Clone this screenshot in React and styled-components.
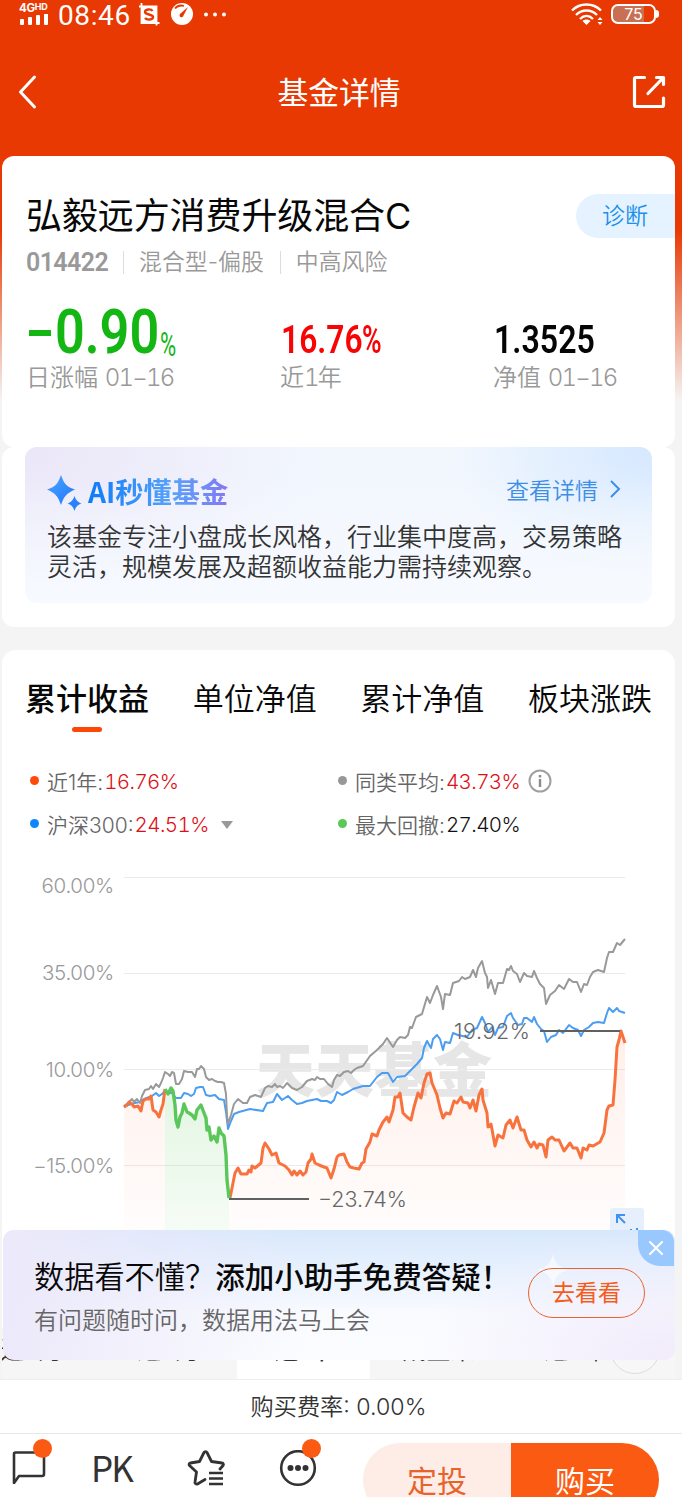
import React from 'react';
import styled, { createGlobalStyle } from 'styled-components';

const tabs = ['累计收益', '单位净值', '累计净值', '板块涨跌'];

const periods = ['近3月', '近6月', '近1年', '成立来', '近2年'];

const gridLines = [
    { label: '60.00%', y: 877.5, textY: 893 },
    { label: '35.00%', y: 973.5, textY: 980 },
    { label: '10.00%', y: 1069.5, textY: 1077 },
    { label: '−15.00%', y: 1165.5, textY: 1173 },
];

const averageLine =
    '124,1106 128,1103 132,1099 134,1102 137,1099 140,1103 142,1096 145,1090 149,1089 151,1086 153,1089 156,1084 159,1087 161,1083 163,1078 165,1072 168,1074 170,1076 172,1072 174,1073 176,1084 179,1084 182,1079 184,1071 188,1072 192,1072 195,1077 197,1069 199,1069 201,1066 204,1069 206,1077 209,1080 212,1079 215,1081 218,1082 221,1082 224,1083 226,1094 227,1115 228,1124 231,1115 234,1104 238,1099 243,1103 247,1103 250,1097 255,1095 261,1097 265,1088 268,1086 272,1087 275,1084 277,1087 280,1086 283,1088 287,1083 292,1088 297,1090 302,1087 307,1081 312,1079 315,1080 317,1077 320,1079 324,1079 328,1084 332,1087 334,1080 337,1075 340,1076 344,1072 348,1071 351,1073 354,1070 357,1068 363,1066 370,1056 377,1050 383,1044 387,1038 393,1047 397,1040 400,1037 405,1038 408,1035 410,1027 412,1028 416,1017 422,1014 427,997 430,1003 433,995 437,986 441,997 443,1009 445,994 450,995 453,983 459,981 462,977 465,979 470,977 473,970 476,977 478,968 482,961 485,973 487,977 488,988 491,980 495,994 498,983 503,983 507,969 509,970 511,966 513,971 517,974 520,982 524,973 527,976 532,977 534,971 537,978 540,984 544,988 546,1004 550,995 555,991 559,985 564,989 569,979 573,982 577,982 581,992 584,984 587,985 590,977 593,972 598,970 604,972 607,958 609,952 613,952 617,943 620,945 625,939';

const indexLine =
    '124,1107 128,1105 132,1104 135,1103 140,1102 144,1099 152,1096 156,1093 159,1096 162,1094 165,1091 168,1093 172,1093 176,1098 181,1098 184,1093 188,1094 191,1096 194,1094 196,1088 200,1087 203,1087 206,1095 210,1096 215,1095 219,1099 224,1100 226,1112 228,1129 231,1121 234,1114 239,1112 250,1109 263,1111 267,1103 273,1102 277,1094 282,1100 288,1096 292,1100 297,1104 302,1103 307,1101 317,1099 321,1101 327,1101 331,1103 334,1100 337,1092 342,1095 348,1092 353,1089 363,1086 370,1086 377,1077 382,1073 388,1073 393,1082 397,1077 405,1076 412,1069 417,1064 422,1058 424,1048 427,1041 431,1048 433,1039 437,1035 440,1039 443,1050 445,1042 450,1043 453,1033 458,1035 467,1037 472,1030 477,1028 482,1017 485,1023 488,1032 492,1027 495,1035 498,1028 503,1027 507,1016 511,1013 513,1018 518,1025 522,1024 524,1018 527,1018 532,1022 534,1017 537,1024 541,1029 544,1031 547,1042 551,1037 556,1035 559,1030 563,1033 569,1025 573,1028 578,1030 581,1036 584,1030 589,1027 593,1023 598,1022 604,1023 607,1013 609,1008 613,1012 617,1008 619,1011 625,1013';

const fundStart =
    '124,1107 127,1105 129,1102 132,1104 134,1107 138,1106 141,1111 143,1101 146,1099 149,1099 151,1096 153,1110 156,1112 159,1117 161,1110 163,1104 165,1089';

const drawdownLine =
    '165,1089 168,1094 171,1088 173,1091 175,1105 176,1120 178,1127 180,1117 182,1113 184,1104 187,1112 189,1113 192,1115 195,1119 197,1110 201,1105 204,1113 206,1118 207,1130 209,1127 211,1140 214,1136 217,1142 219,1128 221,1133 224,1136 226,1155 227,1180 229,1198';

const fundEnd =
    '230,1198 233,1183 235,1173 238,1168 241,1174 247,1174 249,1170 251,1172 252,1166 255,1168 261,1163 263,1148 265,1143 269,1149 272,1155 276,1153 279,1163 285,1166 289,1170 292,1175 294,1171 297,1175 300,1171 303,1175 306,1172 308,1163 311,1159 312,1154 315,1163 319,1165 324,1167 327,1168 331,1178 334,1169 337,1157 339,1155 344,1154 347,1162 350,1167 354,1168 359,1169 362,1163 364,1162 366,1149 370,1142 372,1134 377,1136 379,1130 383,1122 387,1117 389,1122 393,1110 395,1097 398,1097 400,1093 403,1113 407,1117 411,1120 414,1107 418,1093 421,1098 424,1083 427,1074 430,1073 432,1083 435,1090 437,1095 440,1108 443,1118 446,1113 450,1114 454,1101 457,1103 461,1097 463,1102 468,1103 470,1108 473,1100 476,1111 479,1095 482,1089 483,1100 487,1113 488,1127 491,1124 495,1146 498,1135 503,1138 506,1125 510,1120 513,1128 517,1117 521,1130 524,1130 527,1140 531,1147 534,1142 537,1148 539,1144 543,1145 546,1157 548,1140 552,1137 555,1140 559,1140 564,1151 570,1143 573,1148 577,1148 581,1158 583,1148 587,1150 589,1145 593,1146 600,1142 604,1133 607,1110 609,1106 613,1105 615,1080 617,1047 619,1040 621,1031 625,1043';

function StatusBar() {
    return (
        <Status>
            <Signal>
                <Network>
                    4G<small>HD</small>
                </Network>
                <svg width="30" height="13" viewBox="0 0 30 13" fill="#fff">
                    <rect x="1" y="5" width="4" height="6" rx="1" />
                    <rect x="9" y="3" width="4" height="8" rx="1" />
                    <rect x="17" y="1" width="4" height="10" rx="1" />
                    <rect x="25" y="-1" width="4" height="12" rx="1" />
                </svg>
            </Signal>
            <Clock>08:46</Clock>
            <StatusIcons width="92" height="28" viewBox="0 0 92 28">
                <path d="M3.500 2v20h18M1 5.500h17.500v19" fill="none" stroke="#fff" strokeWidth="1.800" />
                <rect x="3" y="5" width="16" height="17" fill="#fff" />
                <path
                    d="M14.500 10c-1.500-2.500-7.500-2-7.500 1s8 2 8 5-6 3.500-8 1"
                    fill="none"
                    stroke="#e83903"
                    strokeWidth="2.400"
                />
                <circle cx="44" cy="13" r="11" fill="#fff" />
                <path d="M37 7.500a8.500 8.500 0 0 1 9-2.500" fill="none" stroke="#e83903" strokeWidth="1.800" />
                <path d="M50 6l-4.500 8.500a2 2 0 1 1-3-2z" fill="#e83903" />
                <g fill="#fff">
                    <circle cx="68" cy="13.500" r="2" />
                    <circle cx="77" cy="13.500" r="2" />
                    <circle cx="86" cy="13.500" r="2" />
                </g>
            </StatusIcons>
            <Wifi width="32" height="24" viewBox="0 0 32 24">
                <g fill="none" stroke="#fff" strokeWidth="2.400">
                    <path d="M1 8.500c8-8 21-8 29 0" />
                    <path d="M5 13c6-6 15-6 21 0" />
                    <path d="M9 17c4-4 9-4 13 0" />
                </g>
                <path d="M11.500 19c2-2 6-2 8 0l-4 4z" fill="#fff" />
                <path d="M26.500 18l2.500-3 2.500 3zM26.500 20l2.500 3 2.500-3z" fill="#fff" />
            </Wifi>
            <Battery>75</Battery>
            <BatteryTip />
        </Status>
    );
}

function NavBar() {
    return (
        <Nav>
            <svg width="20" height="34" viewBox="0 0 20 34">
                <path
                    d="M16.500 2L2.500 17l14 15"
                    fill="none"
                    stroke="#fff"
                    strokeWidth="3"
                    strokeLinecap="round"
                    strokeLinejoin="round"
                />
            </svg>
            <NavTitle>基金详情</NavTitle>
            <svg width="34" height="34" viewBox="0 0 34 34">
                <g
                    fill="none"
                    stroke="#fff"
                    strokeWidth="3.200"
                    strokeLinecap="round"
                    strokeLinejoin="round"
                >
                    <path d="M12.500 2.500H4A1.500 1.500 0 0 0 2.500 4v26A1.500 1.500 0 0 0 4 31.500h26a1.500 1.500 0 0 0 1.500-1.500v-7" />
                    <path d="M24.500 2.500h7v7M31 3L16 18.500" />
                </g>
            </svg>
        </Nav>
    );
}

function FundSummary() {
    return (
        <SummaryCard>
            <TitleRow>
                <FundName>弘毅远方消费升级混合C</FundName>
                <Diagnose>诊断</Diagnose>
            </TitleRow>
            <Meta>
                <Code>014422</Code>
                <MetaItem>混合型-偏股</MetaItem>
                <MetaItem>中高风险</MetaItem>
            </Meta>
            <Metrics>
                <div>
                    <Value $color="#13b613" $size={61}>
                        <Minus />
                        <Digits $width={105} $scale={0.855}>
                            0.90
                        </Digits>
                        <SmallPercent>%</SmallPercent>
                    </Value>
                    <MetricLabel>
                        日涨幅 <MetricDate>01−16</MetricDate>
                    </MetricLabel>
                </div>
                <div>
                    <Value $color="#f90404" $size={38}>
                        <Digits $width={81} $scale={0.835}>
                            16.76
                        </Digits>
                        <Digits $width={20} $scale={0.7}>
                            %
                        </Digits>
                    </Value>
                    <MetricLabel>
                        近<MetricDate>1</MetricDate>年
                    </MetricLabel>
                </div>
                <div>
                    <Value $color="#050505" $size={38}>
                        <Digits $width={102} $scale={0.845}>
                            1.3525
                        </Digits>
                    </Value>
                    <MetricLabel>
                        净值 <MetricDate>01−16</MetricDate>
                    </MetricLabel>
                </div>
            </Metrics>
        </SummaryCard>
    );
}

function AiInsight() {
    return (
        <InsightCard>
            <InsightPanel>
                <InsightHeader>
                    <InsightSpark width="36" height="36" viewBox="0 0 36 36">
                        <defs>
                            <linearGradient id="spark" x1="0" y1="0" x2="1" y2="1">
                                <stop offset="0" stopColor="#4ba6ff" />
                                <stop offset="1" stopColor="#1e76fa" />
                            </linearGradient>
                        </defs>
                        <path
                            d="M14 0c3 9 6 12 14 14.500C20 18 17 21 14 30 11 21 8 18 0 14.500 8 12 11 9 14 0z"
                            fill="url(#spark)"
                        />
                        <path
                            d="M27.500 21c1.500 4 3 6 7 7.500-4 1.500-5.500 3-7 7.500-1.500-4.500-3-6-7-7.500 4-1.500 5.500-3.500 7-7.500z"
                            fill="#2b80fb"
                        />
                    </InsightSpark>
                    <InsightTitle>AI秒懂基金</InsightTitle>
                    <DetailLink>
                        查看详情
                        <svg width="12" height="20" viewBox="0 0 12 20">
                            <path d="M2 2l8 8-8 8" fill="none" stroke="#3e8ee6" strokeWidth="2" />
                        </svg>
                    </DetailLink>
                </InsightHeader>
                <InsightText>
                    该基金专注小盘成长风格，行业集中度高，交易策略
                    <br />
                    灵活，规模发展及超额收益能力需持续观察。
                </InsightText>
            </InsightPanel>
        </InsightCard>
    );
}

function Legend() {
    return (
        <LegendGrid>
            <LegendItem>
                <Dot $color="#ff4a09" />
                近1年:<LegendValue $color="#dc1016">16.76%</LegendValue>
            </LegendItem>
            <LegendItem>
                <Dot $color="#989898" />
                同类平均:<LegendValue $color="#dc1016">43.73%</LegendValue>
                <InfoIcon width="24" height="24" viewBox="0 0 24 24">
                    <circle cx="12" cy="12" r="10.500" fill="none" stroke="#a0a0a0" strokeWidth="2" />
                    <path d="M12 10v8M12 6v2.400" stroke="#8b8b8b" strokeWidth="2.400" />
                </InfoIcon>
            </LegendItem>
            <LegendItem>
                <Dot $color="#0d87fa" />
                沪深300:<LegendValue $color="#dc1016">24.51%</LegendValue>
                <Caret />
            </LegendItem>
            <LegendItem>
                <Dot $color="#5bc858" />
                最大回撤:<LegendValue $color="#111">27.40%</LegendValue>
            </LegendItem>
        </LegendGrid>
    );
}

function ReturnChart() {
    return (
        <Chart viewBox="2 850 673 477">
            <defs>
                <linearGradient id="fundFill" gradientUnits="userSpaceOnUse" x1="0" y1="1030" x2="0" y2="1240">
                    <stop offset="0" stopColor="#ff6a35" stopOpacity="0.11" />
                    <stop offset="1" stopColor="#ff6a35" stopOpacity="0.01" />
                </linearGradient>
                <linearGradient id="drawdownFill" gradientUnits="userSpaceOnUse" x1="0" y1="1090" x2="0" y2="1240">
                    <stop offset="0" stopColor="#5bc858" stopOpacity="0.17" />
                    <stop offset="1" stopColor="#5bc858" stopOpacity="0.05" />
                </linearGradient>
            </defs>
            <Watermark x="374" y="1092" textAnchor="middle">
                天天基金
            </Watermark>
            {gridLines.map(({ label, y, textY }) => (
                <g key={label}>
                    <line x1="124" x2="625" y1={y} y2={y} stroke="#ebebeb" />
                    <AxisLabel x="114" y={textY} textAnchor="end">
                        {label}
                    </AxisLabel>
                </g>
            ))}
            <polygon points={`124,1240 ${fundStart} 165,1240`} fill="url(#fundFill)" />
            <polygon points={`165,1240 ${drawdownLine} 230,1240`} fill="url(#drawdownFill)" />
            <polygon points={`230,1240 ${fundEnd} 625,1240`} fill="url(#fundFill)" />
            <Series points={indexLine} stroke="#4b9df2" strokeWidth="2" />
            <Series points={averageLine} stroke="#999" strokeWidth="2" />
            <Series points={fundStart} stroke="#f8723e" strokeWidth="3" />
            <Series points={fundEnd} stroke="#f8723e" strokeWidth="3" />
            <Series points={drawdownLine} stroke="#5bc75b" strokeWidth="3.400" />
            <path d="M229 1199h80M540 1031h80" stroke="#606060" strokeWidth="2" />
            <PointLabel x="318" y="1207" textLength="89">−23.74%</PointLabel>
            <PointLabel x="454" y="1039" textLength="76">19.92%</PointLabel>
            <rect x="610" y="1208" width="34" height="34" rx="3" fill="#e6f0fd" />
            <path
                d="M625 1215h-8v8M617 1215l8 8M637 1230v-2M631 1230v-1"
                fill="none"
                stroke="#4390f3"
                strokeWidth="2"
            />
        </Chart>
    );
}

function PromoBanner() {
    return (
        <Promo>
            <PromoCopy>
                <PromoTitle>
                    数据看不懂？<b>添加小助手免费答疑！</b>
                </PromoTitle>
                <PromoText>有问题随时问，数据用法马上会</PromoText>
            </PromoCopy>
            <PromoSpark width="32" height="32" viewBox="0 0 32 32">
                <path
                    d="M16 0c2 9 6 14 16 16-10 2-14 7-16 16C14 23 10 18 0 16 10 14 14 9 16 0z"
                    fill="#fff"
                    opacity=".6"
                />
            </PromoSpark>
            <PromoButton>去看看</PromoButton>
            <PromoClose>
                <svg width="14" height="14" viewBox="0 0 14 14">
                    <path d="M1 1l12 12M13 1L1 13" stroke="#fff" strokeWidth="2" strokeLinecap="round" />
                </svg>
            </PromoClose>
        </Promo>
    );
}

function ActionBar() {
    return (
        <Actions>
            <ActionIcon $width={46}>
                <svg width="34" height="34" viewBox="0 0 34 34">
                    <path
                        d="M2 33V4a1.500 1.500 0 0 1 1.500-1.500h27A1.500 1.500 0 0 1 32 4v20a2 2 0 0 1-2 2H7z"
                        fill="none"
                        stroke="#333"
                        strokeWidth="2.600"
                        strokeLinejoin="round"
                    />
                </svg>
                <Badge $left={21} />
            </ActionIcon>
            <Pk>PK</Pk>
            <ActionIcon $width={92}>
                <svg width="38" height="38" viewBox="0 0 38 38">
                    <path
                        d="M18 29.500l-7.500 4.500a1.800 1.800 0 0 1-2.500-2l1.500-10-7-6.500a1.500 1.500 0 0 1 1-2.500l9-1.500 4.500-9a1.700 1.700 0 0 1 3 0l4.500 9 10.500 1.500a1.500 1.500 0 0 1 1 2.500l-3 3.500"
                        fill="none"
                        stroke="#333"
                        strokeWidth="2.800"
                        strokeLinecap="round"
                        strokeLinejoin="round"
                    />
                    <path d="M22 23h14M22 28.500h14M22 34h14" stroke="#333" strokeWidth="2.600" />
                </svg>
            </ActionIcon>
            <ActionIcon $width={60}>
                <svg width="38" height="38" viewBox="0 0 38 38">
                    <circle cx="19" cy="18" r="16.800" fill="none" stroke="#333" strokeWidth="2.600" />
                    <g fill="#333">
                        <circle cx="11.500" cy="18" r="3" />
                        <circle cx="19" cy="18" r="3" />
                        <circle cx="26.500" cy="18" r="3" />
                    </g>
                </svg>
                <Badge $left={23} />
            </ActionIcon>
            <BuyGroup>
                <BuyButton $background="#fdede6" $color="#e8622c">
                    定投
                </BuyButton>
                <BuyButton $background="#fb5a13" $color="#fff">
                    购买
                </BuyButton>
            </BuyGroup>
        </Actions>
    );
}

function App() {
    return (
        <Page>
            <GlobalStyle />
            <StatusBar />
            <NavBar />
            <Content>
                <FundSummary />
                <AiInsight />
                <ChartCard>
                    <Tabs>
                        {tabs.map((tab, i) => (
                            <Tab key={tab} $active={i === 0}>
                                {tab}
                            </Tab>
                        ))}
                    </Tabs>
                    <Legend />
                    <ReturnChart />
                    <Periods>
                        {periods.map((period) => (
                            <Period key={period} $active={period === '近1年'}>
                                {period}
                            </Period>
                        ))}
                        <MoreCircle />
                    </Periods>
                </ChartCard>
                <PromoBanner />
            </Content>
            <Fee>购买费率: 0.00%</Fee>
            <ActionBar />
        </Page>
    );
}

const GlobalStyle = createGlobalStyle`
    * {
        box-sizing: border-box;
    }

    body {
        margin: 0;
        font-family: Inter, 'Noto Sans CJK SC', sans-serif;
        font-weight: 350;
    }

    svg {
        display: block;
        flex-shrink: 0;
    }
`;

const Page = styled.div`
    width: 682px;
    height: 1497px;
    overflow: hidden;
    display: flex;
    flex-direction: column;
    background: linear-gradient(#e83903 0, #e83903 230px, #f4f4f4 400px);
    white-space: nowrap;
`;

const Status = styled.div`
    height: 30px;
    padding: 0 23px 0 19px;
    display: flex;
    align-items: center;
    color: #fff;
`;

const Signal = styled.div`
    width: 39px;
    height: 28px;
`;

const Network = styled.div`
    height: 13px;
    font-size: 11.500px;
    line-height: 11px;
    font-weight: 700;
    letter-spacing: -0.3px;

    small {
        font-size: 9px;
        vertical-align: 2px;
    }
`;

const Clock = styled.div`
    width: 79px;
    font-family: Roboto, sans-serif;
    font-size: 28px;
    line-height: 32px;
    padding-top: 2px;
    font-weight: 400;
    letter-spacing: 0.6px;
`;

const StatusIcons = styled.svg`
    margin-left: 1px;
`;

const Wifi = styled.svg`
    margin: 0 8px 2px auto;
`;

const Battery = styled.div`
    width: 45px;
    height: 20px;
    margin-bottom: 2px;
    border: 2px solid #fff;
    border-radius: 7px;
    background: linear-gradient(90deg, #c96f54 31px, transparent 31px);
    font-size: 16px;
    font-weight: 400;
    line-height: 17px;
    text-align: center;
`;

const BatteryTip = styled.span`
    width: 3px;
    height: 8px;
    margin-bottom: 2px;
    border-radius: 0 3px 3px 0;
    background: #fff;
`;

const Nav = styled.div`
    height: 126px;
    padding: 0 16px 2px 18px;
    display: flex;
    align-items: center;
    justify-content: space-between;
`;

const NavTitle = styled.div`
    color: #fff;
    font-size: 30.800px;
    font-weight: 400;
    margin-left: 8px;
    padding-bottom: 4px;
`;

const Content = styled.div`
    height: 1223px;
    padding: 0 7px 0 2px;
    position: relative;
`;

const SummaryCard = styled.div`
    height: 291px;
    padding: 38px 0 0 24px;
    border-radius: 12px;
    background: #fff;
`;

const TitleRow = styled.div`
    display: flex;
    align-items: center;
    justify-content: space-between;
    height: 44px;
`;

const FundName = styled.div`
    padding-bottom: 7px;
    font-size: 36px;
    font-weight: 400;
    color: #080808;
    letter-spacing: -0.1px;
`;

const Diagnose = styled.div`
    width: 99px;
    height: 44px;
    padding-left: 26px;
    border-radius: 22px 0 0 22px;
    background: #e4f3ff;
    color: #1b8fee;
    font-size: 23px;
    line-height: 44px;
`;

const Meta = styled.div`
    display: flex;
    align-items: center;
    height: 26px;
    margin-top: 11px;
    color: #999;
    font-size: 22.900px;
`;

const Code = styled.span`
    width: 97px;
    font-family: Roboto, sans-serif;
    font-size: 25px;
    font-weight: 600;
    letter-spacing: -0.6px;
`;

const MetaItem = styled.span`
    height: 23px;
    padding: 0 16px 0 15px;
    border-left: 1px solid #ddd;
    line-height: 22px;
`;

const Metrics = styled.div`
    display: grid;
    grid-template-columns: 254px 213px 1fr;
    margin-top: 28px;
`;

const Value = styled.div`
    height: 56px;
    display: flex;
    align-items: baseline;
    color: ${({ $color }) => $color};
    font-family: Roboto, sans-serif;
    font-size: ${({ $size }) => $size}px;
    font-weight: 600;
    line-height: ${({ $size }) => ($size > 40 ? 59 : 74)}px;
    padding-left: ${({ $size }) => ($size > 40 ? 0 : 1)}px;
`;

const Digits = styled.span`
    width: ${({ $width }) => $width}px;
    transform: scaleX(${({ $scale }) => $scale});
    transform-origin: left;
`;

const Minus = styled.span`
    width: 22px;
    height: 6px;
    margin: 4px 4px 0 3px;
    align-self: center;
    background: currentColor;
`;

const SmallPercent = styled.span`
    width: 16px;
    font-size: 34px;
    font-weight: 400;
    line-height: 30px;
    transform: translateY(3px) scaleX(0.65);
    transform-origin: left;
`;

const MetricLabel = styled.div`
    margin-top: 4px;
    color: #999;
    font-size: 24px;
    line-height: 30px;
`;

const MetricDate = styled.span`
    font-variant-numeric: tabular-nums;
    letter-spacing: -1.800px;
`;

const InsightCard = styled.div`
    height: 180px;
    padding: 0 23px;
    border-radius: 12px;
    background: #fff;
`;

const InsightPanel = styled.div`
    height: 156px;
    padding: 27px 31px 0 22px;
    border-radius: 12px;
    background:
        linear-gradient(transparent 20%, rgba(247, 250, 255, 0.95)),
        radial-gradient(ellipse 200px 130px at 100% 0, #d5e8ff, transparent),
        radial-gradient(ellipse 300px 200px at 0 0, #ebe6f8, transparent), #f2f7fe;
`;

const InsightHeader = styled.div`
    height: 34px;
    display: flex;
    align-items: center;
`;

const InsightSpark = styled.svg`
    margin-top: 4px;
`;

const InsightTitle = styled.div`
    margin-left: 5px;
    background: linear-gradient(90deg, #0d7bf8, #58a2fb 60%, #8378f5);
    background-clip: text;
    color: transparent;
    font-family: 'Noto Sans CJK SC', sans-serif;
    font-size: 28.200px;
    font-weight: 700;
    line-height: 34px;
`;

const DetailLink = styled.div`
    margin-left: auto;
    padding-bottom: 4px;
    display: flex;
    align-items: center;
    gap: 11px;
    color: #3e8ee6;
    font-size: 23px;
`;

const InsightText = styled.div`
    margin-top: 14px;
    color: #333;
    font-size: 25px;
    line-height: 30px;
`;

const ChartCard = styled.div`
    height: 729px;
    margin-top: 23px;
    padding-top: 29px;
    border-radius: 14px 14px 0 0;
    background: #fff;
    overflow: hidden;
`;

const Tabs = styled.div`
    display: flex;
    justify-content: space-between;
    padding: 0 23px 0 23px;
`;

const Tab = styled.div`
    height: 53px;
    color: #080808;
    font-size: 31px;
    font-weight: ${({ $active }) => ($active ? 500 : 350)};
    line-height: 40px;

    &::after {
        content: '';
        display: ${({ $active }) => ($active ? 'block' : 'none')};
        width: 30px;
        height: 5px;
        margin: 8px auto 0;
        border-radius: 3px;
        background: #ff4705;
    }
`;

const LegendGrid = styled.div`
    display: grid;
    grid-template-columns: 308px 1fr;
    row-gap: 13px;
    margin: 34px 0 11px;
    padding-left: 28px;
`;

const LegendItem = styled.div`
    display: flex;
    align-items: center;
    height: 30px;
    color: #666;
    font-size: 21px;
`;

const LegendValue = styled.span`
    color: ${({ $color }) => $color};
    font-size: 20.500px;
    margin-left: 1px;
    font-variant-numeric: tabular-nums;
    letter-spacing: -0.600px;
`;

const Dot = styled.span`
    width: 9px;
    height: 9px;
    margin: 0 8px 1px 0;
    border-radius: 50%;
    background: ${({ $color }) => $color};
`;

const InfoIcon = styled.svg`
    margin-left: 8px;
`;

const Caret = styled.span`
    margin: 2px 0 0 12px;
    border: 6px solid transparent;
    border-top: 8px solid #999;
    border-bottom: 0;
`;

const Chart = styled.svg`
    width: 673px;
    height: 477px;
`;

const Series = styled.polyline`
    fill: none;
    stroke-linejoin: round;
`;

const Watermark = styled.text`
    font-family: 'Noto Sans CJK SC', sans-serif;
    font-size: 59px;
    font-weight: 900;
    fill: #e6e6e6;
`;

const AxisLabel = styled.text`
    font-size: 20.500px;
    font-weight: 300;
    letter-spacing: -0.3px;
    fill: #999;
`;

const PointLabel = styled.text`
    font-size: 21.500px;
    font-weight: 300;
    fill: #666;
`;

const Periods = styled.div`
    display: flex;
    height: 52px;
    margin-left: -39px;
    background: #f6f6f6;
    position: relative;
`;

const Period = styled.div`
    width: ${({ $active }) => ($active ? 133 : 137)}px;
    background: ${({ $active }) => ($active ? '#fff' : 'transparent')};
    color: #333;
    font-size: 24px;
    font-weight: ${({ $active }) => ($active ? 500 : 350)};
    line-height: 48px;
    text-align: center;
`;

const MoreCircle = styled.span`
    width: 50px;
    height: 50px;
    border: 1px solid #ddd;
    border-radius: 50%;
    background: #f7f7f7;
    position: absolute;
    right: 15px;
    top: -3px;
`;

const Promo = styled.div`
    position: absolute;
    left: 3px;
    right: 7px;
    top: 1074px;
    height: 130px;
    padding: 0 30px 0 31px;
    display: flex;
    align-items: center;
    justify-content: space-between;
    border-radius: 11px;
    background:
        radial-gradient(ellipse 260px 130px at 100% 100%, #f1ebfb, transparent),
        linear-gradient(90deg, #ece9fa, rgba(236, 233, 250, 0) 45%),
        linear-gradient(#d8e8fc, #f9fbff 65%, #fbfcff);
`;

const PromoCopy = styled.div`
    padding-top: 7px;
`;

const PromoTitle = styled.div`
    color: #080808;
    font-size: 30.200px;
    line-height: 44px;

    b {
        font-weight: 500;
        font-size: 29.500px;
    }
`;

const PromoText = styled.div`
    color: #666;
    font-size: 24px;
    line-height: 43px;
`;

const PromoSpark = styled.svg`
    position: absolute;
    right: 106px;
    top: 24px;
`;

const PromoButton = styled.div`
    width: 117px;
    height: 50px;
    border: 1.500px solid #ec622c;
    border-radius: 25px;
    color: #f55c1b;
    font-size: 23px;
    font-weight: 400;
    line-height: 48px;
    text-align: center;
    margin-bottom: 4px;
    z-index: 1;
`;

const PromoClose = styled.div`
    position: absolute;
    top: 0;
    right: 1px;
    width: 36px;
    height: 36px;
    display: grid;
    place-items: center;
    border-radius: 0 12px 0 22px;
    background: #99c8ff;
`;

const Fee = styled.div`
    height: 55px;
    border-top: 1px solid #eee;
    border-bottom: 1px solid #e8e8e8;
    background: #fff;
    color: #333;
    font-size: 23.200px;
    line-height: 54px;
    text-align: center;
    padding-right: 5px;
`;

const Actions = styled.div`
    height: 63px;
    padding-left: 12px;
    display: flex;
    align-items: flex-start;
    overflow: hidden;
    background: #fff;
`;

const ActionIcon = styled.div`
    width: ${({ $width }) => $width}px;
    padding-top: 16px;
    position: relative;
`;

const Badge = styled.span`
    position: absolute;
    top: 5px;
    left: ${({ $left }) => $left}px;
    width: 19px;
    height: 19px;
    border-radius: 50%;
    background: #fb5a13;
`;

const Pk = styled.div`
    width: 129px;
    padding: 12px 0 0 33px;
    color: #333;
    font-family: 'Noto Sans CJK SC', sans-serif;
    font-size: 35px;
    font-weight: 400;
    line-height: 42px;
    letter-spacing: -2px;
`;

const BuyGroup = styled.div`
    display: flex;
    margin: 9px 0 0 24px;
    border-radius: 37px;
    overflow: hidden;
    flex-shrink: 0;
`;

const BuyButton = styled.div`
    width: 148px;
    height: 74px;
    background: ${({ $background }) => $background};
    color: ${({ $color }) => $color};
    font-size: 30px;
    font-weight: 400;
    line-height: 76px;
    text-align: center;
`;

export default App;
